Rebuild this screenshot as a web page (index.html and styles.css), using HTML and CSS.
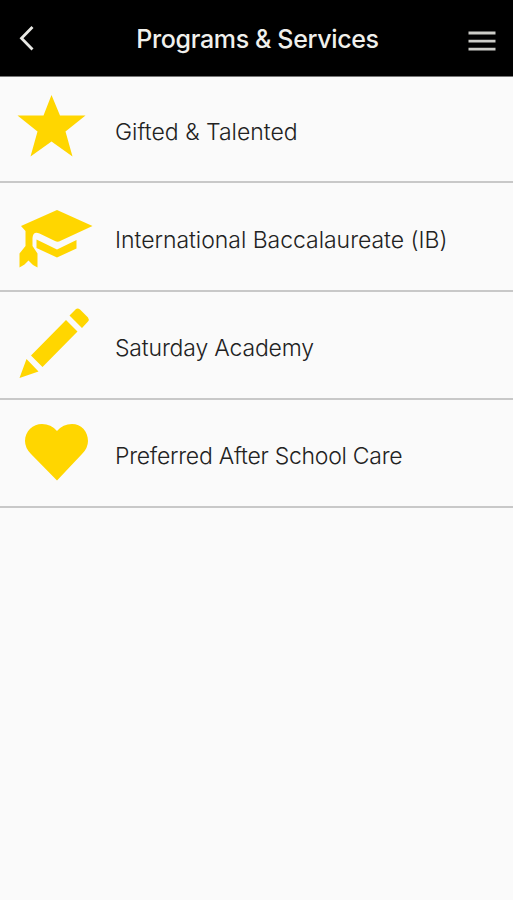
FILE: index.html
```html
<!DOCTYPE html>
<html lang="en">
<head>
<meta charset="utf-8">
<title>Programs &amp; Services</title>
<link rel="stylesheet" href="styles.css">
</head>
<body>
<header class="bar">
  <svg class="back" viewBox="0 0 20 30" aria-label="Back"><path d="M16.500 4 5.500 15.200 16.500 26.500"/></svg>
  <h1 class="title">Programs &amp; Services</h1>
  <svg class="menu" viewBox="0 0 28 22" aria-label="Menu"><path d="M.5 3H27.5M.5 11.2H27.5M.5 19.2H27.5"/></svg>
</header>
<main class="list">
  <a class="row row-first">
    <svg class="icon" viewBox="0 77 110 104"><path d="M51.5 95 60 115.5H85.500L65.500 131.500 72.500 156.500 51.500 141.500 30.500 156.500 37.500 131.500 17.500 115.500H43.500Z"/></svg>
    <span class="label gifted">Gifted &amp; Talented</span>
  </a>
  <a class="row">
    <svg class="icon" viewBox="0 183 110 107"><path d="M57 210 92.500 226 59 241.500Q57 242 55 241L39.500 233.500Q33 231 32.500 238V246L37.500 253.500V267.500L33 265 28.500 260.500 24.500 264.500 19.500 267.500V253.500L25.500 246V231L21 226Z"/><path d="M36.500 239.500 57 249.500 76.500 240V248.500L57 257.500 36.500 248Z"/></svg>
    <span class="label baccalaureate">International Baccalaureate (IB)</span>
  </a>
  <a class="row row-short">
    <svg class="icon" viewBox="0 292 110 106"><path d="M66 320 77.500 331.500 42.500 367 31 355.500ZM76 309Q78 308 80 309.500L88 317.500Q89.500 319.500 88 321.500L82 328 69.500 315.500ZM26.500 359 38.500 371.500 19.500 378Z"/></svg>
    <span class="label saturday">Saturday Academy</span>
  </a>
  <a class="row row-short">
    <svg class="icon" viewBox="0 400 110 106"><path d="M57 480.500 31 454Q25 448 25 441C25 431 33 424 42 424Q51 424 57 431Q63 424 72 424C81 424 88 431 88 441Q88 448 82 454Z"/></svg>
    <span class="label preferred">Preferred After School Care</span>
  </a>
</main>
</body>
</html>
```

FILE: styles.css
```css
* { box-sizing: border-box; }
body {
  margin: 0;
  min-height: 100vh;
  background: #fafafa;
  color: #222;
  font-family: Inter, "Liberation Sans", sans-serif;
}
.bar {
  display: flex;
  align-items: center;
  height: 77px;
  padding: 0 17px 0 16px;
  background: #000;
  border-bottom: 1px solid #777;
  color: #f0f0ec;
}
.back { width: 20px; height: 30px; }
.menu { width: 28px; height: 22px; margin-top: 5px; }
.back path, .menu path { fill: none; stroke: #e8e8e4; stroke-width: 2.8; }
.menu path { stroke: #ccccc8; }
.title {
  flex: 1;
  margin: 0 0 0 11px;
  padding-top: 2px;
  text-align: center;
  font-size: 25px;
  font-weight: 500;
  letter-spacing: -.35px;
  white-space: nowrap;
}
.list { display: flex; flex-direction: column; }
.row {
  display: flex;
  align-items: center;
  height: 109px;
  border-bottom: 2px solid #c8c8c8;
}
.row-first { height: 106px; }
.row-short { height: 108px; }
.icon { flex: none; width: 110px; height: 100%; fill: #ffd600; }
.label {
  padding: 6px 0 0 5px;
  font-size: 23px;
  font-weight: 300;
  line-height: 30px;
  white-space: nowrap;
}
.baccalaureate { letter-spacing: -.03px; }
.saturday { letter-spacing: -.17px; }
.preferred { letter-spacing: -.27px; }
```
